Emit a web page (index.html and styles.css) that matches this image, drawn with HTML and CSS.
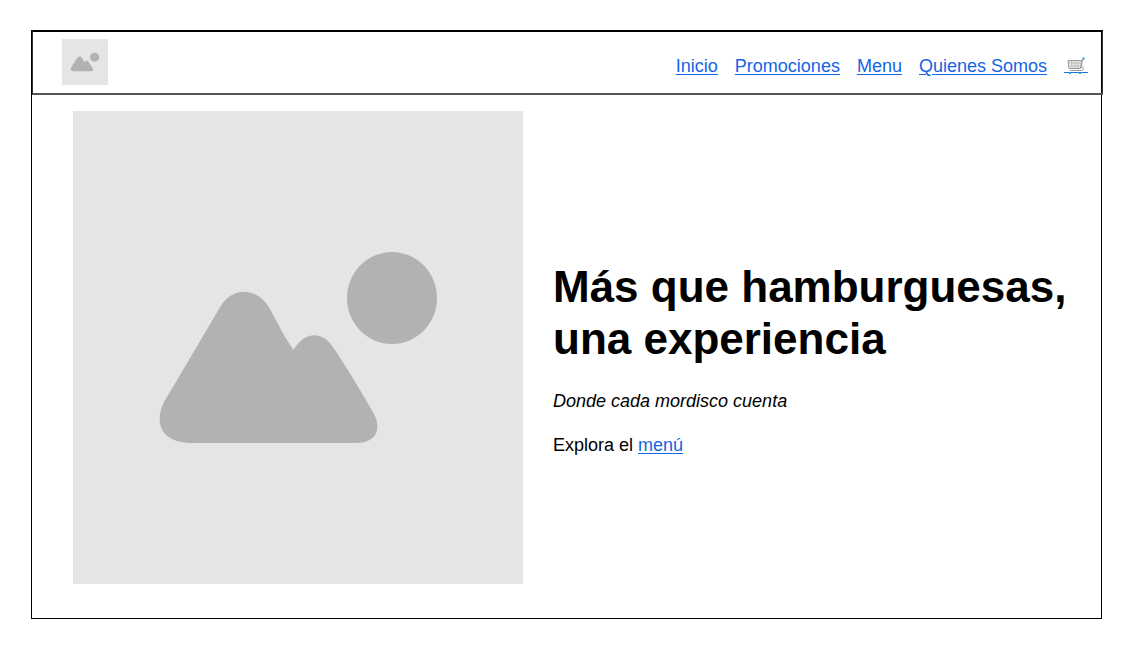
FILE: index.html
```html
<!DOCTYPE html>
<html lang="es">
<head>
<meta charset="utf-8">
<meta name="viewport" content="width=device-width, initial-scale=1">
<title>Hamburguesas</title>
<link rel="stylesheet" href="styles.css">
</head>
<body>
<div class="frame">
  <header class="header">
    <svg class="logo" viewBox="0 0 450 473" preserveAspectRatio="none" role="img" aria-label="Logo">
      <rect class="placeholder-bg" width="450" height="473"/>
      <g class="placeholder-shape">
        <ellipse cx="319" cy="187" rx="45" ry="46"/>
        <path d="M146 198C158 175 184 175 197 198C205 213 211 225 220.500 239C232 220 249 220 260 236C276 260 289 282 301 303C309 319 303 332 282 332H119C90 332 80 314 91 291Z"/>
      </g>
    </svg>
    <nav class="nav" aria-label="Principal">
      <a class="link" href="#inicio">Inicio</a>
      <a class="link" href="#promociones">Promociones</a>
      <a class="link" href="#menu">Menu</a>
      <a class="link" href="#quienes-somos">Quienes Somos</a>
      <a class="cart-link" href="#carrito" aria-label="Carrito">
        <svg class="cart" viewBox="0 0 24 20" aria-hidden="true">
          <path class="cart-basket" d="M4 4.500H18L16.500 12.500H5Z"/>
          <path class="cart-grid" d="M7.500 4.500L8 12M11 4.500V12M14.500 4.500L13.500 12M4.500 7H17M5 10H16.500"/>
          <path class="cart-frame" d="M19.500 2.500L18.500 4L16.500 12.500M17 11C20 10 20.500 14 17.500 14.500H6"/>
          <path class="cart-line" d="M0 16.500H24"/>
          <path class="cart-accent" d="M18.500 2.500H20.500M5 17H7M15 17H17"/>
        </svg>
      </a>
    </nav>
  </header>
  <main class="hero">
    <svg class="picture" viewBox="0 0 450 473" role="img" aria-label="Imagen de portada">
      <rect class="placeholder-bg" width="450" height="473"/>
      <g class="placeholder-shape">
        <ellipse cx="319" cy="187" rx="45" ry="46"/>
        <path d="M146 198C158 175 184 175 197 198C205 213 211 225 220.500 239C232 220 249 220 260 236C276 260 289 282 301 303C309 319 303 332 282 332H119C90 332 80 314 91 291Z"/>
      </g>
    </svg>
    <div class="copy">
      <h1 class="title">Más que hamburguesas, una experiencia</h1>
      <p class="tagline">Donde cada mordisco cuenta</p>
      <p class="explore">Explora el <a class="link" href="#menu">menú</a></p>
    </div>
  </main>
</div>
</body>
</html>
```
FILE: styles.css
```css
* {
  box-sizing: border-box;
}

body {
  margin: 0;
  background: #fff;
  color: #000;
  font: 18px/20px "Liberation Sans", Arial, sans-serif;
}

.frame {
  margin: 30px 25px 31px 31px;
  border: 1px solid #000;
}

.header {
  display: flex;
  align-items: center;
  justify-content: space-between;
  margin: -1px -2px 0 0;
  padding: 7px 14px 8px 29px;
  border: 1px solid #333;
  border-top: 2px solid #000;
  border-bottom: 2px solid #555;
}

.logo {
  width: 46px;
  height: 46px;
}

.placeholder-bg {
  fill: #e5e5e5;
}

.placeholder-shape {
  fill: #b2b2b2;
}

.nav {
  display: flex;
  align-items: center;
  gap: 17px;
  padding-top: 8px;
}

.link {
  color: #1464e6;
  text-decoration: underline;
  text-decoration-thickness: 1px;
  text-underline-offset: 2px;
}

.cart-link {
  display: flex;
}

.cart {
  width: 24px;
  height: 20px;
  fill: none;
}

.cart-basket {
  fill: #eee;
  stroke: #999;
}

.cart-grid {
  stroke: #bbb;
}

.cart-frame {
  stroke: #999;
}

.cart-line {
  stroke: #1676d2;
}

.cart-accent {
  stroke: #2196d8;
  stroke-width: 2;
}

.hero {
  display: grid;
  grid-template-columns: 450fr 524fr;
  align-items: center;
  gap: 30px;
  padding: 16px 24px 34px 41px;
}

.picture {
  display: block;
  width: 100%;
  height: auto;
}

.copy {
  padding-top: 20px;
}

.title {
  margin: 0 0 26px;
  font-size: 44px;
  line-height: 52px;
}

.tagline {
  margin: 0 0 24px;
  font-style: italic;
}

.explore {
  margin: 0;
}
```
